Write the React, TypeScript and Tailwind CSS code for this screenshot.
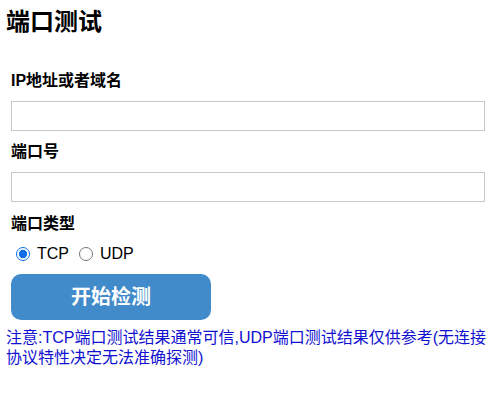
export default function App() {
  return (
    <div
      className="min-h-[416px] bg-white px-[6px] pt-[7px] text-black"
      style={{ fontFamily: '"Liberation Sans", Arial, "Noto Sans CJK SC", sans-serif' }}
    >
      <h1 className="text-[24px] font-bold leading-[30px]">端口测试</h1>

      <form className="mt-[34px] pl-[5px]" onSubmit={(e) => e.preventDefault()}>
        <label className="block text-[16px] font-bold leading-[20px]">IP地址或者域名</label>
        <input
          type="text"
          className="mt-[10px] block h-[30px] w-[474px] border border-[#c8c8c8] bg-white px-2 outline-none"
        />

        <label className="mt-[11px] block text-[16px] font-bold leading-[20px]">端口号</label>
        <input
          type="text"
          className="mt-[10px] block h-[30px] w-[474px] border border-[#c8c8c8] bg-white px-2 outline-none"
        />

        <label className="mt-[12px] block text-[16px] font-bold leading-[20px]">端口类型</label>
        <div className="mt-[10px] flex items-center pl-[5px] text-[16px] leading-[20px]">
          <label className="flex items-center">
            <input type="radio" name="ptype" defaultChecked className="m-0 h-[14px] w-[14px] accent-[#0b6ee8]" />
            <span className="ml-[7px]">TCP</span>
          </label>
          <label className="ml-[10px] flex items-center">
            <input type="radio" name="ptype" className="m-0 h-[14px] w-[14px]" />
            <span className="ml-[7px]">UDP</span>
          </label>
        </div>

        <button
          type="submit"
          className="mt-[10px] block h-[46px] w-[200px] rounded-[10px] bg-[#428bca] text-[20px] font-bold text-white"
        >
          开始检测
        </button>
      </form>

      <p className="mt-[8px] text-[16px] leading-[20px] text-[#1010d0]">
        注意:TCP端口测试结果通常可信,UDP端口测试结果仅供参考(无连接协议特性决定无法准确探测)
      </p>
    </div>
  )
}
